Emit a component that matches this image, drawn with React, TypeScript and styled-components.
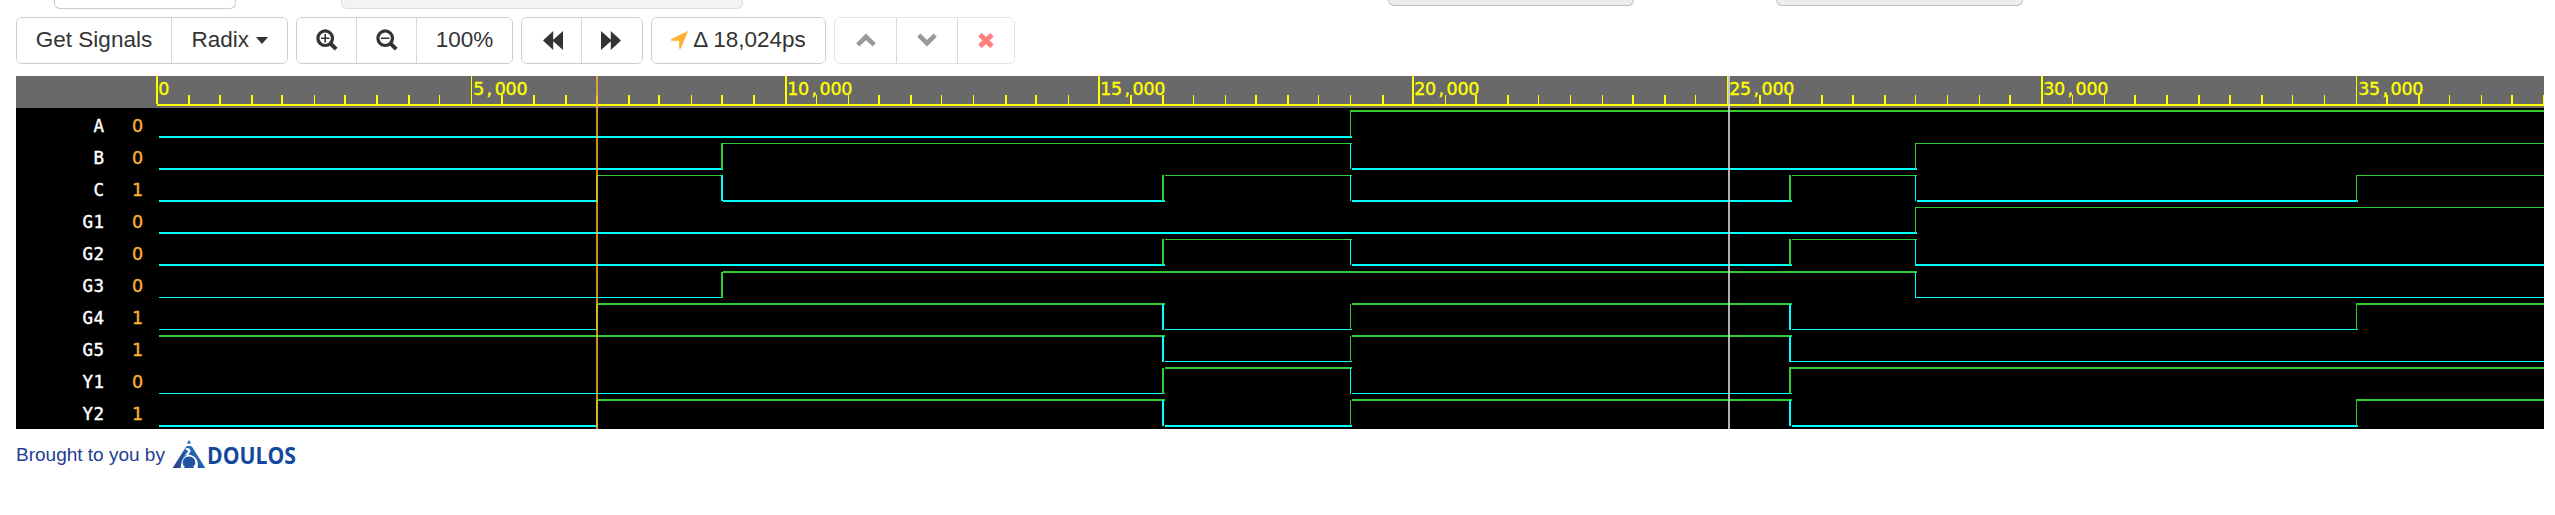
import React from "react";
import styled, { createGlobalStyle } from "styled-components";

const GlobalStyle = createGlobalStyle`
  body {
    margin: 0;
    background: #fff;
    color: #333;
    font-family: "Liberation Sans", Arial, sans-serif;
    overflow: hidden;
  }
`;

const Page = styled.div`
  display: flex;
  flex-direction: column;
  width: 2555px;
  height: 515px;
`;

const FormStrip = styled.div`
  display: flex;
  align-items: flex-start;
  height: 17px;
`;

const FieldEnd = styled.div<{ $gap: number; $w: number; $h: number; $fill: string; $line: string }>`
  box-sizing: border-box;
  flex: none;
  margin-left: ${(p) => p.$gap}px;
  width: ${(p) => p.$w}px;
  height: ${(p) => p.$h}px;
  border: 1px solid ${(p) => p.$line};
  border-top: 0;
  border-radius: 0 0 6px 6px;
  background: ${(p) => p.$fill};
`;

const Toolbar = styled.div`
  display: flex;
  gap: 8px;
  height: 47px;
  padding-left: 16px;
  margin-bottom: 12px;
`;

const ButtonGroup = styled.div<{ $dim?: boolean }>`
  box-sizing: border-box;
  display: flex;
  border: 1px solid ${(p) => (p.$dim ? "#e3e3e3" : "#ccc")};
  border-radius: 6px;
  overflow: hidden;
`;

const Button = styled.button<{ $w: number; $dim?: boolean }>`
  box-sizing: border-box;
  display: flex;
  align-items: center;
  justify-content: center;
  width: ${(p) => p.$w}px;
  padding: 0 0 1px;
  border: 0;
  background: #fff;
  color: #333;
  font: 22.5px "Liberation Sans", Arial, sans-serif;
  white-space: pre;
  & + & {
    border-left: 1px solid ${(p) => (p.$dim ? "#d8d8d8" : "#ccc")};
  }
  svg {
    flex: none;
    display: block;
  }
`;

const Caret = styled.span`
  margin: 0 0 0 6.5px;
  border: 6.5px solid transparent;
  border-top: 7px solid #333;
  border-bottom: 0;
`;

const SkipIcon = styled.svg<{ $forward?: boolean }>`
  margin: ${(p) => (p.$forward ? "0 3px 0 0" : "0 0 0 3px")};
`;

const Delta = styled.span`
  padding-left: 5px;
`;

const Waves = styled.svg`
  display: block;
  flex: none;
  margin-left: 16px;
  background: #000;
`;

const RulerText = styled.text`
  font: 17.5px "DejaVu Sans", sans-serif;
  fill: #ff0;
  stroke: #ff0;
  stroke-width: 0.35px;
`;

const SignalName = styled.text`
  font: 17.5px "DejaVu Sans Mono", monospace;
  fill: #fff;
  stroke: #fff;
  stroke-width: 0.4px;
`;

const SignalValue = styled.text`
  font: 17.5px "DejaVu Sans", sans-serif;
  fill: #ffb22f;
  stroke: #ffb22f;
  stroke-width: 0.35px;
`;

const Credit = styled.div`
  display: flex;
  height: 52px;
  padding: 8px 0 0 16px;
  color: #1d3e95;
  font-size: 19px;
  line-height: 35px;
`;

const Logo = styled.svg`
  display: block;
  margin-left: 7px;
  overflow: visible;
`;

const LogoText = styled.text`
  font: 700 22.5px "Open Sans", sans-serif;
  fill: #14489b;
`;

/* Left edge of each 500ps tick; the second list holds those one pixel wide. */
const ticks = [
  156, 188, 219, 251, 281, 314, 344, 376, 408, 439,
  471, 501, 533, 565, 596, 628, 658, 691, 721, 753,
  785, 816, 848, 878, 910, 941, 973, 1005, 1035, 1068,
  1098, 1130, 1162, 1193, 1225, 1255, 1287, 1318, 1350, 1382,
  1412, 1445, 1475, 1507, 1538, 1570, 1602, 1632, 1664, 1695,
  1727, 1759, 1789, 1821, 1852, 1884, 1915, 1947, 1979, 2009,
  2041, 2072, 2104, 2134, 2166, 2198, 2229, 2261, 2292, 2324,
  2356, 2386, 2418, 2449, 2481, 2511, 2543,
];
const thinTicks = new Set([
  314, 439, 471, 691, 816, 848, 941, 973, 1068, 1193, 1225, 1318, 1350, 1445, 1538, 1570,
  1602, 1695, 1727, 1915, 1947, 1979, 2072, 2104, 2292, 2324, 2356, 2449, 2481, 2543,
]);

type Edge = { x: number; w: number; end: number };
const edges: Record<number, Edge> = {
  7: { x: 596, w: 2, end: 598 },
  9: { x: 721, w: 2, end: 723 },
  16: { x: 1162, w: 2, end: 1165 },
  19: { x: 1350, w: 1, end: 1352 },
  26: { x: 1789, w: 2, end: 1792 },
  28: { x: 1915, w: 1, end: 1917 },
  35: { x: 2356, w: 1, end: 2358 },
};

type Signal = {
  name: string;
  value: string;
  start: 0 | 1;
  hi: [number, number];
  lo: [number, number];
  at: number[];
  joined?: number[];
};
const signals: Signal[] = [
  { name: "A", value: "0", start: 0, hi: [110, 2], lo: [136, 2], at: [19], joined: [19] },
  { name: "B", value: "0", start: 0, hi: [143, 1], lo: [168, 2], at: [9, 19, 28], joined: [9, 28] },
  { name: "C", value: "1", start: 0, hi: [175, 1], lo: [200, 2], at: [7, 9, 16, 19, 26, 28, 35], joined: [35] },
  { name: "G1", value: "0", start: 0, hi: [207, 1], lo: [232, 2], at: [28], joined: [28] },
  { name: "G2", value: "0", start: 0, hi: [239, 1], lo: [264, 2], at: [16, 19, 26, 28], joined: [28] },
  { name: "G3", value: "0", start: 0, hi: [271, 2], lo: [297, 1], at: [9, 28], joined: [28] },
  { name: "G4", value: "1", start: 0, hi: [303, 2], lo: [329, 1], at: [7, 16, 19, 26, 35], joined: [35] },
  { name: "G5", value: "1", start: 1, hi: [335, 2], lo: [361, 1], at: [16, 19, 26], joined: [26] },
  { name: "Y1", value: "0", start: 0, hi: [367, 2], lo: [393, 1], at: [16, 19, 26], joined: [26] },
  { name: "Y2", value: "1", start: 0, hi: [399, 2], lo: [425, 2], at: [7, 16, 19, 26, 35], joined: [35] },
];

const CELL = 10.8;
const glyphStarts = (text: string, x: number) =>
  text
    .split("")
    .map((c, i) => (x + i * CELL + (c === "," ? 2.6 : 0)).toFixed(2))
    .join(" ");

const colorOf = (level: number) => (level ? "#32cd32" : "#0ff");

function Trace({ signal }: { signal: Signal }) {
  const parts: React.ReactElement[] = [];
  let level: number = signal.start;
  let x = 159;
  const line = (to: number) => {
    const [y, h] = level ? signal.hi : signal.lo;
    parts.push(<rect key={`h${x}`} x={x} y={y} width={to - x} height={h} fill={colorOf(level)} />);
  };
  const top = signal.hi[1] === 2 ? signal.hi[0] + 1 : signal.hi[0];
  signal.at.forEach((t) => {
    const e = edges[t];
    line(e.end);
    level = 1 - level;
    parts.push(
      <rect key={`v${e.x}`} x={e.x} y={top} width={e.w} height={signal.lo[0] + 1 - top} fill={colorOf(level)} />
    );
    x = signal.joined?.includes(t) ? e.x : e.end;
  });
  line(2544);
  return <>{parts}</>;
}

function Zoom({ plus }: { plus?: boolean }) {
  return (
    <svg width="22" height="22" viewBox="0 0 22 22" fill="none" stroke="#333">
      <circle cx="9.2" cy="9.2" r="7.3" strokeWidth="3.2" />
      <path d="M14.3 14.3L20.2 20.2" strokeWidth="4" />
      <path d={plus ? "M5 9.2h8.4M9.2 5v8.4" : "M5 9.2h8.4"} strokeWidth="1.6" />
    </svg>
  );
}

function Skip({ forward }: { forward?: boolean }) {
  return (
    <SkipIcon $forward={forward} width="20" height="19" viewBox="0 0 20 19" fill="#333">
      <path d={forward ? "M0 0L9.8 8.8V0L20 9.5L9.8 19V10.2L0 19Z" : "M20 0L10.2 8.8V0L0 9.5L10.2 19V10.2L20 19Z"} />
    </SkipIcon>
  );
}

function Chevron({ down }: { down?: boolean }) {
  return (
    <svg width="20" height="14" viewBox="0 0 20 14" fill="none" stroke="#999" strokeWidth="4.6">
      <path d={down ? "M1.8 2.2L10 10.2L18.2 2.2" : "M1.8 11.8L10 3.8L18.2 11.8"} />
    </svg>
  );
}

export default function App() {
  return (
    <>
      <GlobalStyle />
      <Page>
        <FormStrip>
          <FieldEnd $gap={54} $w={182} $h={9} $fill="#fff" $line="#ccc" />
          <FieldEnd $gap={105} $w={402} $h={9} $fill="#f3f3f3" $line="#ddd" />
          <FieldEnd $gap={645} $w={246} $h={6} $fill="#ededed" $line="#bfbfbf" />
          <FieldEnd $gap={142} $w={247} $h={6} $fill="#ededed" $line="#bfbfbf" />
        </FormStrip>
        <Toolbar>
          <ButtonGroup>
            <Button $w={154}>Get Signals</Button>
            <Button $w={116}>
              Radix
              <Caret />
            </Button>
          </ButtonGroup>
          <ButtonGroup>
            <Button $w={59}><Zoom plus /></Button>
            <Button $w={60}><Zoom /></Button>
            <Button $w={96}>100%</Button>
          </ButtonGroup>
          <ButtonGroup>
            <Button $w={59}><Skip /></Button>
            <Button $w={61}><Skip forward /></Button>
          </ButtonGroup>
          <ButtonGroup>
            <Button $w={173}>
              <svg width="17" height="18" viewBox="0 0 17 18" fill="#ffb22f">
                <path d="M16.6 0.4L9.6 17.4H8.4V9.6H0.4V8.2Z" stroke="#ffb22f" strokeWidth="0.6" strokeLinejoin="round" />
              </svg>
              <Delta>Δ 18,024ps</Delta>
            </Button>
          </ButtonGroup>
          <ButtonGroup $dim>
            <Button $w={61} $dim><Chevron /></Button>
            <Button $w={61} $dim><Chevron down /></Button>
            <Button $w={57} $dim>
              <svg width="16" height="15" viewBox="0 0 16 15" stroke="#ff7f7f" strokeWidth="5">
                <path d="M2 1.7L14 13.3M14 1.7L2 13.3" />
              </svg>
            </Button>
          </ButtonGroup>
        </Toolbar>

        <Waves width="2528" height="353" viewBox="16 76 2528 353" shapeRendering="crispEdges">
          <rect x="16" y="76" width="2528" height="32" fill="#696969" />
          {ticks.map((x, i) => (
            <React.Fragment key={x}>
              <rect
                x={x}
                y={i % 10 ? 95 : 76}
                width={thinTicks.has(x) ? 1 : 2}
                height={i % 10 ? 9 : 28}
                fill="#ff0"
              />
              {i % 10 === 0 && (
                <RulerText y="94.8" x={glyphStarts((i * 500).toLocaleString("en-US"), x + 2.2)}>
                  {(i * 500).toLocaleString("en-US")}
                </RulerText>
              )}
            </React.Fragment>
          ))}
          <rect x="157" y="104" width="2387" height="2" fill="#ff0" />
          {signals.map((s, i) => (
            <g key={s.name}>
              <SignalName x={glyphStarts(s.name, 104.2 - s.name.length * CELL)} y={131.6 + i * 32}>{s.name}</SignalName>
              <SignalValue x="132" y={131.6 + i * 32}>{s.value}</SignalValue>
              <Trace signal={s} />
            </g>
          ))}
          <rect x="596" y="76" width="2" height="353" fill="#ffb22f" opacity="0.8" />
          <rect x="1728" y="76" width="2" height="353" fill="#e0e0e0" opacity="0.78" />
        </Waves>

        <Credit>
          <span>Brought to you by</span>
          <Logo width="144" height="44" viewBox="172 437 144 44">
            <defs>
              <linearGradient id="mark" gradientUnits="userSpaceOnUse" x1="174" y1="468" x2="198" y2="446">
                <stop offset="0" stopColor="#2f3f93" />
                <stop offset="0.55" stopColor="#1f5aa6" />
                <stop offset="1" stopColor="#2378b8" />
              </linearGradient>
            </defs>
            <path d="M189 440L191.2 443.6H186.8Z" fill="url(#mark)" />
            <path d="M186 446.8Q189 444.6 192 446.8L205.3 468H172.7Z" fill="url(#mark)" />
            <path d="M184.6 449Q189.5 446.6 190.6 450.6Q190 454.4 185 456.4Q181.4 459 180.6 468H197.6Q199.4 456.8 189 454.6Q184.4 455 182.8 458.4Q185.8 454 188.2 451.6Q187 449.6 184.6 449Z" fill="#fff" />
            <path d="M189 456.4A6.2 6 0 0 1 193 467L194.5 468H183.5L185 467A6.2 6 0 0 1 189 456.4Z" fill="#2454a0" />
            <LogoText x="207" y="463.5" textLength="89" lengthAdjust="spacingAndGlyphs">DOULOS</LogoText>
          </Logo>
        </Credit>
      </Page>
    </>
  );
}
